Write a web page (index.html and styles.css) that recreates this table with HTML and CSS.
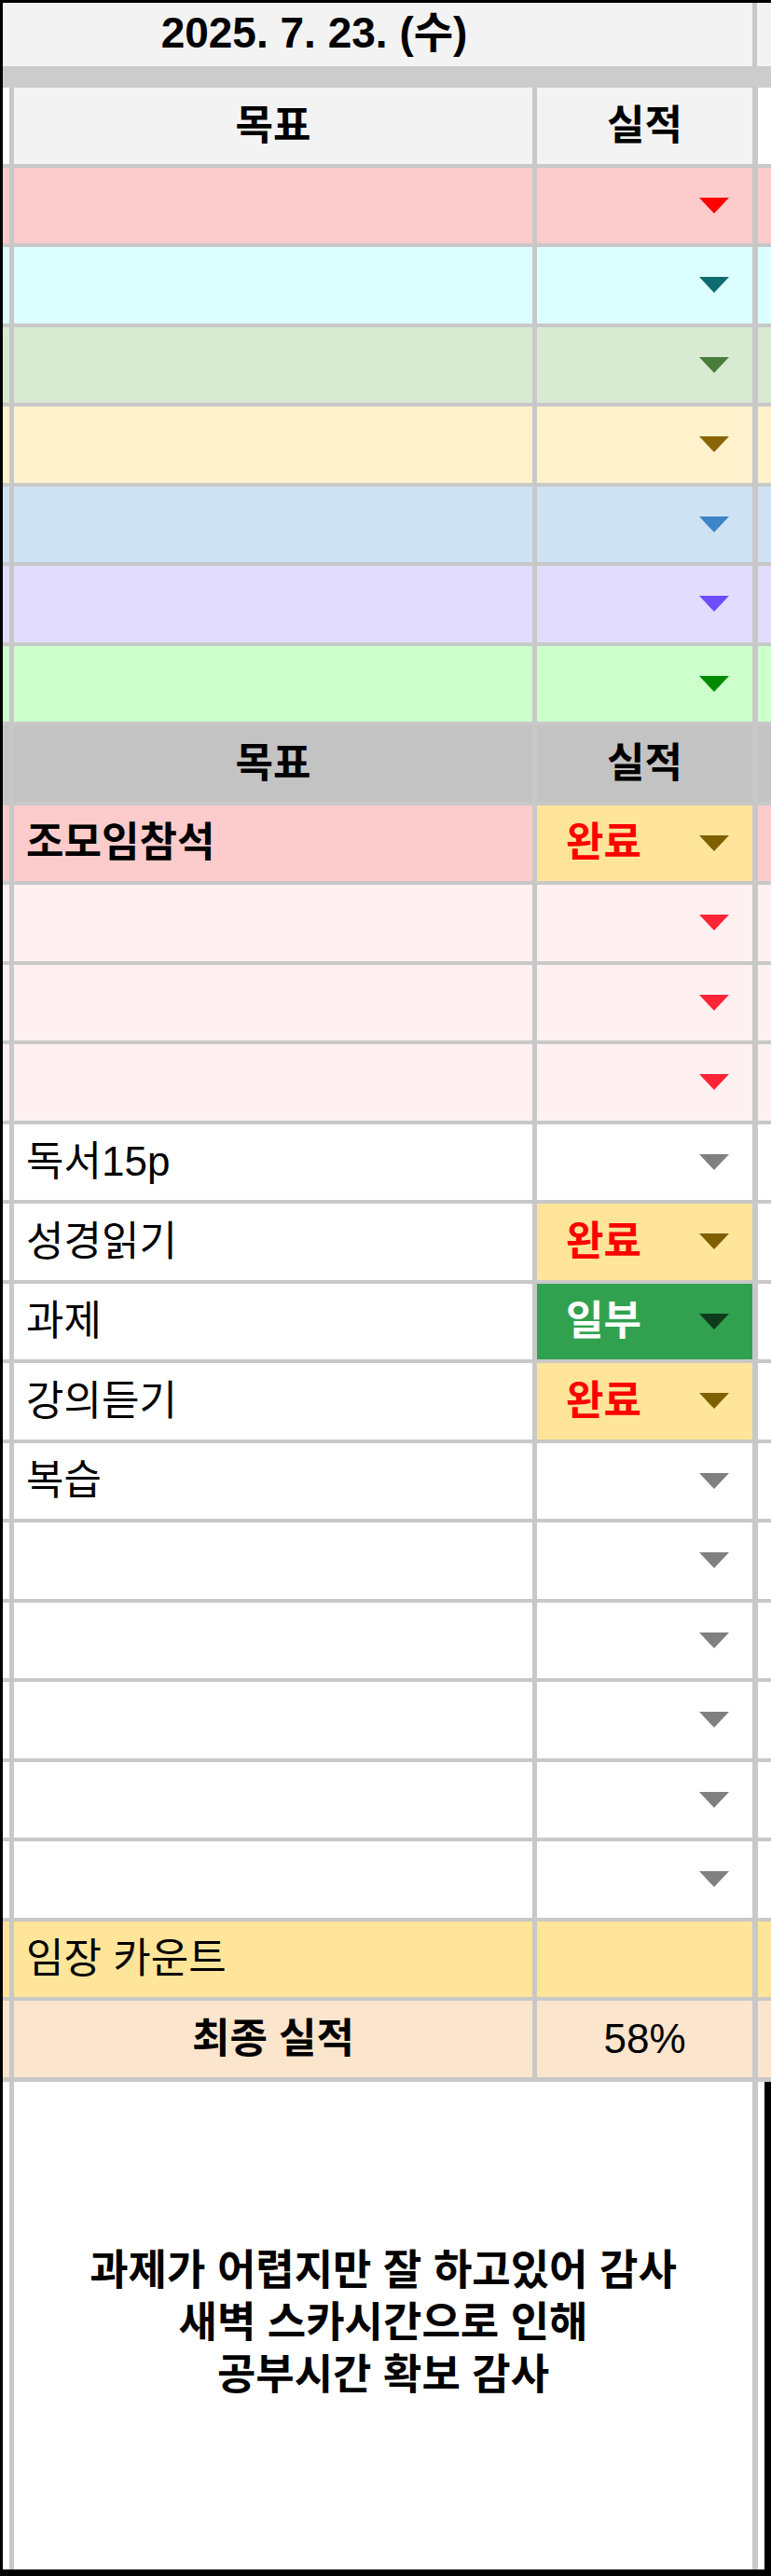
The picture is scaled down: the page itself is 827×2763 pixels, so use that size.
FILE: index.html
```html
<!DOCTYPE html>
<html lang="ko">
<head>
  <meta charset="UTF-8">
  <meta name="viewport" content="width=device-width, initial-scale=1">
  <title>2025. 7. 23. 목표 실적</title>
  <link rel="stylesheet" href="styles.css">
</head>
<body>
  <div class="frame">
    <div class="date-row">
      <div class="date">2025. 7. 23. (수)</div>
    </div>
    <div class="band"></div>

    <div class="sheet">
      <!-- 주간 목표 -->
      <div class="row head">
        <div class="cell goal">목표</div>
        <div class="cell result">실적</div>
      </div>
      <div class="row c-red">
        <div class="cell goal"></div>
        <div class="cell result"><span class="arrow"></span></div>
      </div>
      <div class="row c-cyan">
        <div class="cell goal"></div>
        <div class="cell result"><span class="arrow"></span></div>
      </div>
      <div class="row c-green">
        <div class="cell goal"></div>
        <div class="cell result"><span class="arrow"></span></div>
      </div>
      <div class="row c-yellow">
        <div class="cell goal"></div>
        <div class="cell result"><span class="arrow"></span></div>
      </div>
      <div class="row c-blue">
        <div class="cell goal"></div>
        <div class="cell result"><span class="arrow"></span></div>
      </div>
      <div class="row c-purple">
        <div class="cell goal"></div>
        <div class="cell result"><span class="arrow"></span></div>
      </div>
      <div class="row c-lime">
        <div class="cell goal"></div>
        <div class="cell result"><span class="arrow"></span></div>
      </div>

      <!-- 오늘 목표 -->
      <div class="row head dark">
        <div class="cell goal">목표</div>
        <div class="cell result">실적</div>
      </div>
      <div class="row c-red">
        <div class="cell goal strong">조모임참석</div>
        <div class="cell result done"><span class="status">완료</span><span class="arrow"></span></div>
      </div>
      <div class="row c-pink">
        <div class="cell goal"></div>
        <div class="cell result"><span class="arrow"></span></div>
      </div>
      <div class="row c-pink">
        <div class="cell goal"></div>
        <div class="cell result"><span class="arrow"></span></div>
      </div>
      <div class="row c-pink">
        <div class="cell goal"></div>
        <div class="cell result"><span class="arrow"></span></div>
      </div>
      <div class="row">
        <div class="cell goal">독서15p</div>
        <div class="cell result"><span class="arrow"></span></div>
      </div>
      <div class="row">
        <div class="cell goal">성경읽기</div>
        <div class="cell result done"><span class="status">완료</span><span class="arrow"></span></div>
      </div>
      <div class="row">
        <div class="cell goal">과제</div>
        <div class="cell result partial"><span class="status">일부</span><span class="arrow"></span></div>
      </div>
      <div class="row">
        <div class="cell goal">강의듣기</div>
        <div class="cell result done"><span class="status">완료</span><span class="arrow"></span></div>
      </div>
      <div class="row">
        <div class="cell goal">복습</div>
        <div class="cell result"><span class="arrow"></span></div>
      </div>
      <div class="row">
        <div class="cell goal"></div>
        <div class="cell result"><span class="arrow"></span></div>
      </div>
      <div class="row">
        <div class="cell goal"></div>
        <div class="cell result"><span class="arrow"></span></div>
      </div>
      <div class="row">
        <div class="cell goal"></div>
        <div class="cell result"><span class="arrow"></span></div>
      </div>
      <div class="row">
        <div class="cell goal"></div>
        <div class="cell result"><span class="arrow"></span></div>
      </div>
      <div class="row">
        <div class="cell goal"></div>
        <div class="cell result"><span class="arrow"></span></div>
      </div>

      <div class="row c-count">
        <div class="cell goal">임장 카운트</div>
        <div class="cell result"></div>
      </div>
      <div class="row c-total">
        <div class="cell goal center strong">최종 실적</div>
        <div class="cell result center">58%</div>
      </div>
    </div>

    <div class="note-wrap">
      <div class="note">과제가 어렵지만 잘 하고있어 감사<br>새벽 스카시간으로 인해<br>공부시간 확보 감사</div>
    </div>
  </div>
</body>
</html>
```

FILE: styles.css
```css
* {
  box-sizing: border-box;
}

body {
  margin: 0;
  background: #000;
  font-family: "Liberation Sans", "Noto Sans CJK KR", sans-serif;
  font-size: 44px;
  color: #000;
}

.frame {
  width: 827px;
  height: 2763px;
  border-top: 3px solid #000;
  border-left: 3px solid #000;
  border-bottom: 7px solid #000;
  background: #fff;
  display: flex;
  flex-direction: column;
}

.date-row {
  height: 68px;
  background: #f3f3f3;
  display: flex;
}

.date {
  width: 809px;
  border-right: 5px solid #c8c8c8;
  padding: 0 136px 4px 0;
  display: flex;
  align-items: center;
  justify-content: center;
  font-size: 46px;
  font-weight: bold;
  line-height: 1;
}

.band {
  height: 23px;
  background: #cccccc;
}

.sheet {
  display: flex;
  flex-direction: column;
  gap: 4px;
  padding-bottom: 5px;
  background: #c8c8c8;
}

.row {
  height: 81.5px;
  display: grid;
  grid-template-columns: 561px 242px;
  padding-left: 7px;
  background: #fff;
}

.cell {
  display: flex;
  align-items: center;
  border-left: 5px solid #c8c8c8;
  line-height: 1;
}

.goal {
  padding-left: 13px;
}

.result {
  border-right: 6px solid #c8c8c8;
  padding: 0 25px 0 31px;
}

.center {
  justify-content: center;
  padding: 0;
}

.strong {
  font-weight: bold;
}

/* header rows */
.head .cell {
  justify-content: center;
  padding: 0;
  font-weight: bold;
  background: #f3f3f3;
}

.head.dark,
.head.dark .cell {
  background: #c3c3c3;
}

/* dropdown arrow */
.arrow {
  margin-left: auto;
  width: 0;
  height: 0;
  border-left: 16px solid transparent;
  border-right: 16px solid transparent;
  border-top: 17px solid #808080;
}

.status {
  font-weight: bold;
  color: #ff0000;
}

/* row colours */
.c-red {
  background: #fccccc;
}

.c-red .arrow {
  border-top-color: #ff0000;
}

.c-cyan {
  background: #dcffff;
}

.c-cyan .arrow {
  border-top-color: #0e6b70;
}

.c-green {
  background: #d9ead3;
}

.c-green .arrow {
  border-top-color: #4a7d3c;
}

.c-yellow {
  background: #fff2cc;
}

.c-yellow .arrow {
  border-top-color: #8a6508;
}

.c-blue {
  background: #cfe2f3;
}

.c-blue .arrow {
  border-top-color: #3d85c6;
}

.c-purple {
  background: #e2dcfe;
}

.c-purple .arrow {
  border-top-color: #6e4cff;
}

.c-lime {
  background: #ccffcc;
}

.c-lime .arrow {
  border-top-color: #008a00;
}

.c-pink {
  background: #fff1f1;
}

.c-pink .arrow {
  border-top-color: #ff2436;
}

.c-count {
  background: #ffe599;
}

.c-total {
  background: #fce5cd;
}

/* status chips */
.result.done {
  background: #ffe599;
}

.result.done .arrow {
  border-top-color: #7f6000;
}

.result.partial {
  background: #31a14f;
}

.result.partial .status {
  color: #fff;
}

.result.partial .arrow {
  border-top-color: #0f3b1c;
}

/* comment */
.note-wrap {
  flex: 1;
  display: flex;
  padding-left: 7px;
  border-right: 7px solid #000;
  background: #fff;
}

.note {
  width: 803px;
  border-left: 5px solid #c8c8c8;
  border-right: 6px solid #c8c8c8;
  display: flex;
  align-items: center;
  justify-content: center;
  text-align: center;
  font-size: 45px;
  font-weight: bold;
  line-height: 56px;
  padding-bottom: 4px;
}
```
